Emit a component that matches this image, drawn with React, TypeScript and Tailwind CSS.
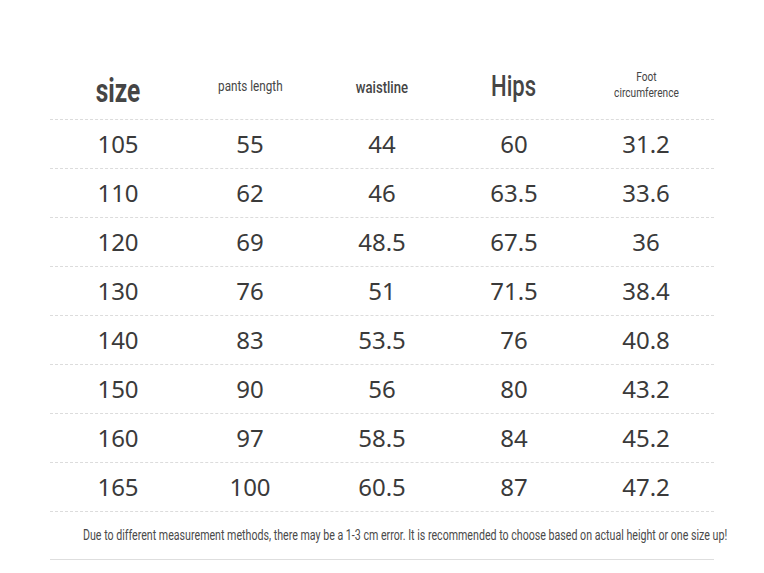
import React from "react";

const rows = [
  ["105", "55", "44", "60", "31.2"],
  ["110", "62", "46", "63.5", "33.6"],
  ["120", "69", "48.5", "67.5", "36"],
  ["130", "76", "51", "71.5", "38.4"],
  ["140", "83", "53.5", "76", "40.8"],
  ["150", "90", "56", "80", "43.2"],
  ["160", "97", "58.5", "84", "45.2"],
  ["165", "100", "60.5", "87", "47.2"],
];

const cond = { fontFamily: 'Roboto, "Liberation Sans", sans-serif' };
const num = { fontFamily: '"Noto Sans", "Liberation Sans", sans-serif' };

export default function App() {
  return (
    <div className="w-[764px] h-[573px] bg-white overflow-hidden">
      <div className="ml-[50px] w-[664px] pt-[56px]">
        <div
          className="h-[64px] border-b border-dashed border-[#dcdcdc] grid grid-cols-[132px_132px_132px_132px_132px] pl-[2px] items-center text-[#454545] text-center"
          style={cond}
        >
          <div className="pt-[6px]">
            <span className="inline-block text-[34px] font-bold leading-none scale-x-[0.72]">size</span>
          </div>
          <div className="pb-[3px]">
            <span className="inline-block text-[15px] leading-none scale-x-[0.78]">pants length</span>
          </div>
          <div>
            <span className="inline-block text-[16px] font-medium leading-none scale-x-[0.82]">waistline</span>
          </div>
          <div>
            <span className="inline-block text-[29px] font-medium leading-none scale-x-[0.76]">Hips</span>
          </div>
          <div className="pb-[3px]">
            <span className="inline-block text-[13px] leading-[16px] scale-x-[0.78]">
              Foot
              <br />
              circumference
            </span>
          </div>
        </div>
        {rows.map((r) => (
          <div
            key={r[0]}
            className="h-[49px] border-b border-dashed border-[#dcdcdc] grid grid-cols-[132px_132px_132px_132px_132px] pl-[2px] items-center text-center text-[#3a3a3a] text-[24px]"
            style={num}
          >
            {r.map((v, i) => (
              <div key={i} className="leading-none pb-[1px]">
                {v}
              </div>
            ))}
          </div>
        ))}
        <div className="h-[48px] border-b border-[#dedede] flex items-center">
          <div className="pl-[33px] pb-[4px] whitespace-nowrap">
            <span className="inline-block origin-left scale-x-[0.76] text-[14px] text-[#4a4a4a]" style={cond}>
              Due to different measurement methods, there may be a 1-3 cm error. It is recommended to choose based on actual height or one size up!
            </span>
          </div>
        </div>
      </div>
    </div>
  );
}
